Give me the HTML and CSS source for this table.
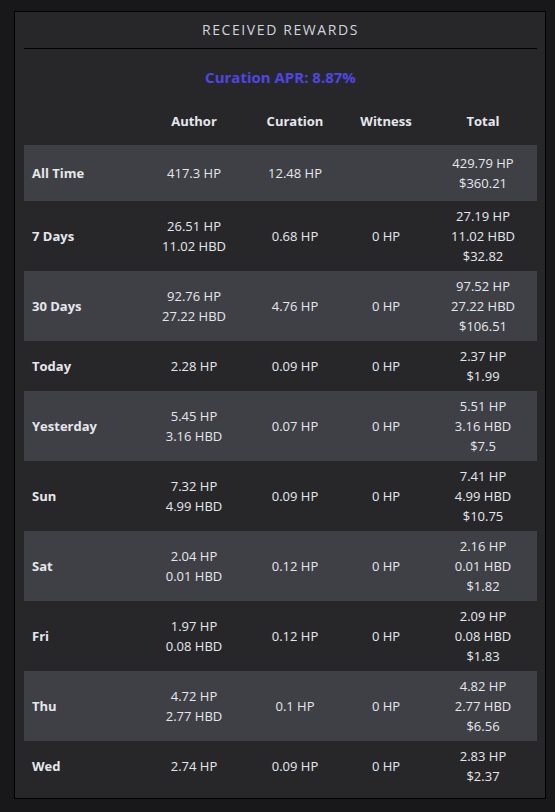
FILE: index.html
```html
<!DOCTYPE html>
<html lang="en">
<head>
<meta charset="utf-8">
<title>Received Rewards</title>
<link rel="stylesheet" href="styles.css">
</head>
<body>
<section class="card">
  <h2 class="card-title">RECEIVED REWARDS</h2>
  <p class="apr">Curation APR: 8.87%</p>
  <table class="rewards">
    <colgroup>
      <col class="c-label"><col class="c-author"><col class="c-curation"><col class="c-witness"><col class="c-total">
    </colgroup>
    <thead>
      <tr><th></th><th>Author</th><th>Curation</th><th>Witness</th><th>Total</th></tr>
    </thead>
    <tbody>
      <tr class="stripe first"><td class="label">All Time</td><td>417.3 HP</td><td>12.48 HP</td><td></td><td>429.79 HP<br>$360.21</td></tr>
      <tr><td class="label">7 Days</td><td>26.51 HP<br>11.02 HBD</td><td>0.68 HP</td><td>0 HP</td><td>27.19 HP<br>11.02 HBD<br>$32.82</td></tr>
      <tr class="stripe"><td class="label">30 Days</td><td>92.76 HP<br>27.22 HBD</td><td>4.76 HP</td><td>0 HP</td><td>97.52 HP<br>27.22 HBD<br>$106.51</td></tr>
      <tr><td class="label">Today</td><td>2.28 HP</td><td>0.09 HP</td><td>0 HP</td><td>2.37 HP<br>$1.99</td></tr>
      <tr class="stripe"><td class="label">Yesterday</td><td>5.45 HP<br>3.16 HBD</td><td>0.07 HP</td><td>0 HP</td><td>5.51 HP<br>3.16 HBD<br>$7.5</td></tr>
      <tr><td class="label">Sun</td><td>7.32 HP<br>4.99 HBD</td><td>0.09 HP</td><td>0 HP</td><td>7.41 HP<br>4.99 HBD<br>$10.75</td></tr>
      <tr class="stripe"><td class="label">Sat</td><td>2.04 HP<br>0.01 HBD</td><td>0.12 HP</td><td>0 HP</td><td>2.16 HP<br>0.01 HBD<br>$1.82</td></tr>
      <tr><td class="label">Fri</td><td>1.97 HP<br>0.08 HBD</td><td>0.12 HP</td><td>0 HP</td><td>2.09 HP<br>0.08 HBD<br>$1.83</td></tr>
      <tr class="stripe"><td class="label">Thu</td><td>4.72 HP<br>2.77 HBD</td><td>0.1 HP</td><td>0 HP</td><td>4.82 HP<br>2.77 HBD<br>$6.56</td></tr>
      <tr><td class="label">Wed</td><td>2.74 HP</td><td>0.09 HP</td><td>0 HP</td><td>2.83 HP<br>$2.37</td></tr>
    </tbody>
  </table>
</section>
</body>
</html>
```
FILE: styles.css
```css
html, body {
  margin: 0;
  background: #18181b;
}
body {
  padding: 11px 0 0 14px;
  font-family: "Open Sans", "Noto Sans", sans-serif;
  font-size: 13px;
  color: #e5e7eb;
}
.card {
  box-sizing: border-box;
  width: 532px;
  background: #27272a;
  border: 1px solid #000;
  padding: 0 8px 7px 9px;
}
.card-title {
  margin: 0;
  height: 36px;
  line-height: 36px;
  font-size: 14px;
  font-weight: 400;
  letter-spacing: 1.6px;
  text-align: center;
  color: #d1d5db;
  border-bottom: 1px solid #000;
}
.apr {
  margin: 18px 0 0;
  line-height: 20px;
  font-size: 15px;
  font-weight: 700;
  text-align: center;
  color: #4f46e5;
}
.rewards {
  width: 513px;
  border-collapse: collapse;
  table-layout: fixed;
}
.c-label { width: 117px; }
.c-author { width: 106px; }
.c-curation { width: 96px; }
.c-witness { width: 86px; }
.c-total { width: 108px; }
.rewards th {
  padding: 24px 0 14px;
  line-height: 20px;
  font-weight: 700;
  text-align: center;
  color: #e5e7eb;
}
.rewards td {
  padding: 5px 0;
  line-height: 20px;
  text-align: center;
  vertical-align: middle;
  white-space: nowrap;
}
.rewards tr.first td {
  padding-top: 8px;
  padding-bottom: 8px;
}
.rewards td.label {
  text-align: left;
  padding-left: 8px;
  font-weight: 700;
}
.stripe {
  background: #3f3f46;
}
```
